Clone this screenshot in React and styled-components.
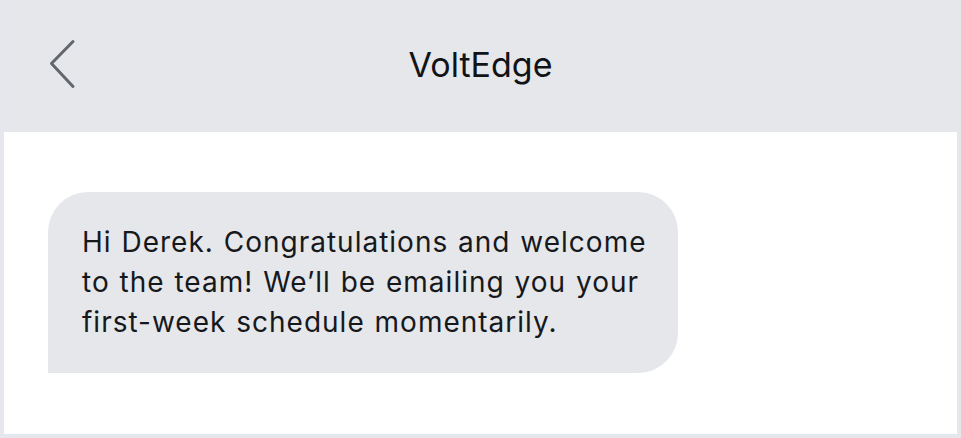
import React from "react";
import styled, { createGlobalStyle } from "styled-components";

const GlobalStyle = createGlobalStyle`
  html, body {
    margin: 0;
    padding: 0;
    background: #ffffff;
  }
  * {
    box-sizing: border-box;
  }
`;

const Frame = styled.div`
  width: 961px;
  height: 438px;
  display: flex;
  flex-direction: column;
  border: 4px solid #e6e7ec;
  border-top: 0;
  background: #ffffff;
  font-family: Inter, "Noto Sans", sans-serif;
  overflow: hidden;
`;

const Header = styled.header`
  position: relative;
  height: 132px;
  margin: 0 -4px;
  background: #e5e7eb;
  display: flex;
  align-items: center;
  justify-content: center;
  flex-shrink: 0;
`;

const BackButton = styled.button`
  position: absolute;
  left: 46px;
  top: 37px;
  width: 34px;
  height: 54px;
  padding: 0;
  border: 0;
  background: transparent;
  display: flex;
  align-items: center;
  justify-content: center;
  cursor: pointer;
`;

const Title = styled.h1`
  margin: 0;
  padding-bottom: 3px;
  font-size: 34px;
  font-weight: 400;
  color: #111317;
  letter-spacing: 0;
`;

const Body = styled.main`
  flex: 1;
  padding: 60px 44px 0;
`;

const Bubble = styled.div`
  width: 630px;
  min-height: 181px;
  background: #e5e7eb;
  border-radius: 40px 40px 40px 0;
  padding: 30px 20px 0 34px;
  font-size: 28px;
  line-height: 40px;
  letter-spacing: 1px;
  word-spacing: 1px;
  color: #16181c;
`;

function Chevron() {
  return (
    <svg width="34" height="54" viewBox="0 0 34 54" fill="none">
      <path
        d="M27 4.5 L5.5 26.5 L27 49.5"
        stroke="#62666d"
        strokeWidth="3"
        strokeLinecap="round"
        strokeLinejoin="round"
      />
    </svg>
  );
}

export default function App() {
  return (
    <>
      <GlobalStyle />
      <Frame>
        <Header>
          <BackButton aria-label="Back">
            <Chevron />
          </BackButton>
          <Title>VoltEdge</Title>
        </Header>
        <Body>
          <Bubble>
            Hi Derek. Congratulations and welcome to the team! We’ll be
            emailing you your first-week schedule momentarily.
          </Bubble>
        </Body>
      </Frame>
    </>
  );
}
